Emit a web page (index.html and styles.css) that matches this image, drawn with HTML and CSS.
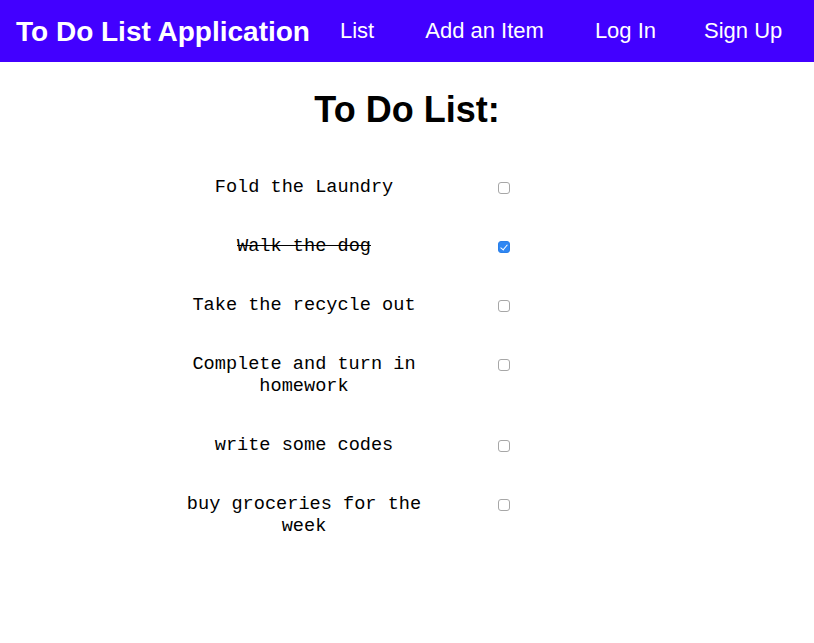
FILE: index.html
```html
<!DOCTYPE html>
<html>
<head>
<meta charset="utf-8">
<title>To Do List Application</title>
<link rel="stylesheet" href="styles.css">
</head>
<body>
<header class="topbar">
  <div class="brand">To Do List Application</div>
  <nav class="nav">
    <a class="nav-link" href="#">List</a>
    <a class="nav-link" href="#">Add an Item</a>
    <a class="nav-link" href="#">Log In</a>
    <a class="nav-link" href="#">Sign Up</a>
  </nav>
</header>
<main class="content">
  <h1 class="title">To Do List:</h1>
  <ul class="todo-list">
    <li class="todo"><span class="todo-text">Fold the Laundry</span><input class="todo-check" type="checkbox"></li>
    <li class="todo"><span class="todo-text done">Walk the dog</span><input class="todo-check" type="checkbox" checked></li>
    <li class="todo"><span class="todo-text">Take the recycle out</span><input class="todo-check" type="checkbox"></li>
    <li class="todo"><span class="todo-text">Complete and turn in homework</span><input class="todo-check" type="checkbox"></li>
    <li class="todo"><span class="todo-text">write some codes</span><input class="todo-check" type="checkbox"></li>
    <li class="todo"><span class="todo-text">buy groceries for the week</span><input class="todo-check" type="checkbox"></li>
  </ul>
</main>
</body>
</html>
```

FILE: styles.css
```css
* { box-sizing: border-box; }
html, body { margin: 0; padding: 0; background: #fff; }
body { font-family: "Liberation Sans", Arial, sans-serif; color: #000; }

.topbar {
  height: 62px;
  background: #4200ff;
  display: flex;
  align-items: center;
  padding-left: 16px;
}
.brand {
  color: #fff;
  font-weight: bold;
  font-size: 28px;
  margin-right: 6px;
  position: relative;
  top: 1px;
}
.nav { display: flex; align-items: center; }
.nav-link {
  color: #fff;
  text-decoration: none;
  font-size: 22px;
  padding: 0 24px;
}
.nav-link:nth-child(2) { margin-left: 3px; }
.nav-link:nth-child(3) { margin-left: 3px; }

.content { display: flex; flex-direction: column; align-items: center; }
.title {
  margin: 26px 0 45px;
  font-size: 36px;
  font-weight: bold;
  line-height: 44px;
}

.todo-list {
  list-style: none;
  margin: 0;
  padding: 0;
  align-self: flex-start;
  margin-left: 184px;
  display: flex;
  flex-direction: column;
  gap: 37px;
}
.todo {
  display: grid;
  grid-template-columns: 240px 13px;
  column-gap: 74px;
  align-items: start;
}
.todo-text {
  font-family: "Liberation Mono", "Courier New", monospace;
  font-size: 18.6px;
  line-height: 22px;
  text-align: center;
}
.todo-text.done { text-decoration: line-through; }

.todo-check {
  appearance: none;
  -webkit-appearance: none;
  margin: 5px 0 0;
  width: 12px;
  height: 12px;
  border: 1px solid #a7a7a7;
  border-radius: 3px;
  background: #fff;
  position: relative;
}
.todo-check:checked {
  background: #2f87f3;
  border-color: #2a7fe8;
}
.todo-check:checked::after {
  content: "";
  position: absolute;
  left: 3px;
  top: 1px;
  width: 3px;
  height: 6px;
  border: solid #fff;
  border-width: 0 1.5px 1.5px 0;
  transform: rotate(40deg);
}
```
